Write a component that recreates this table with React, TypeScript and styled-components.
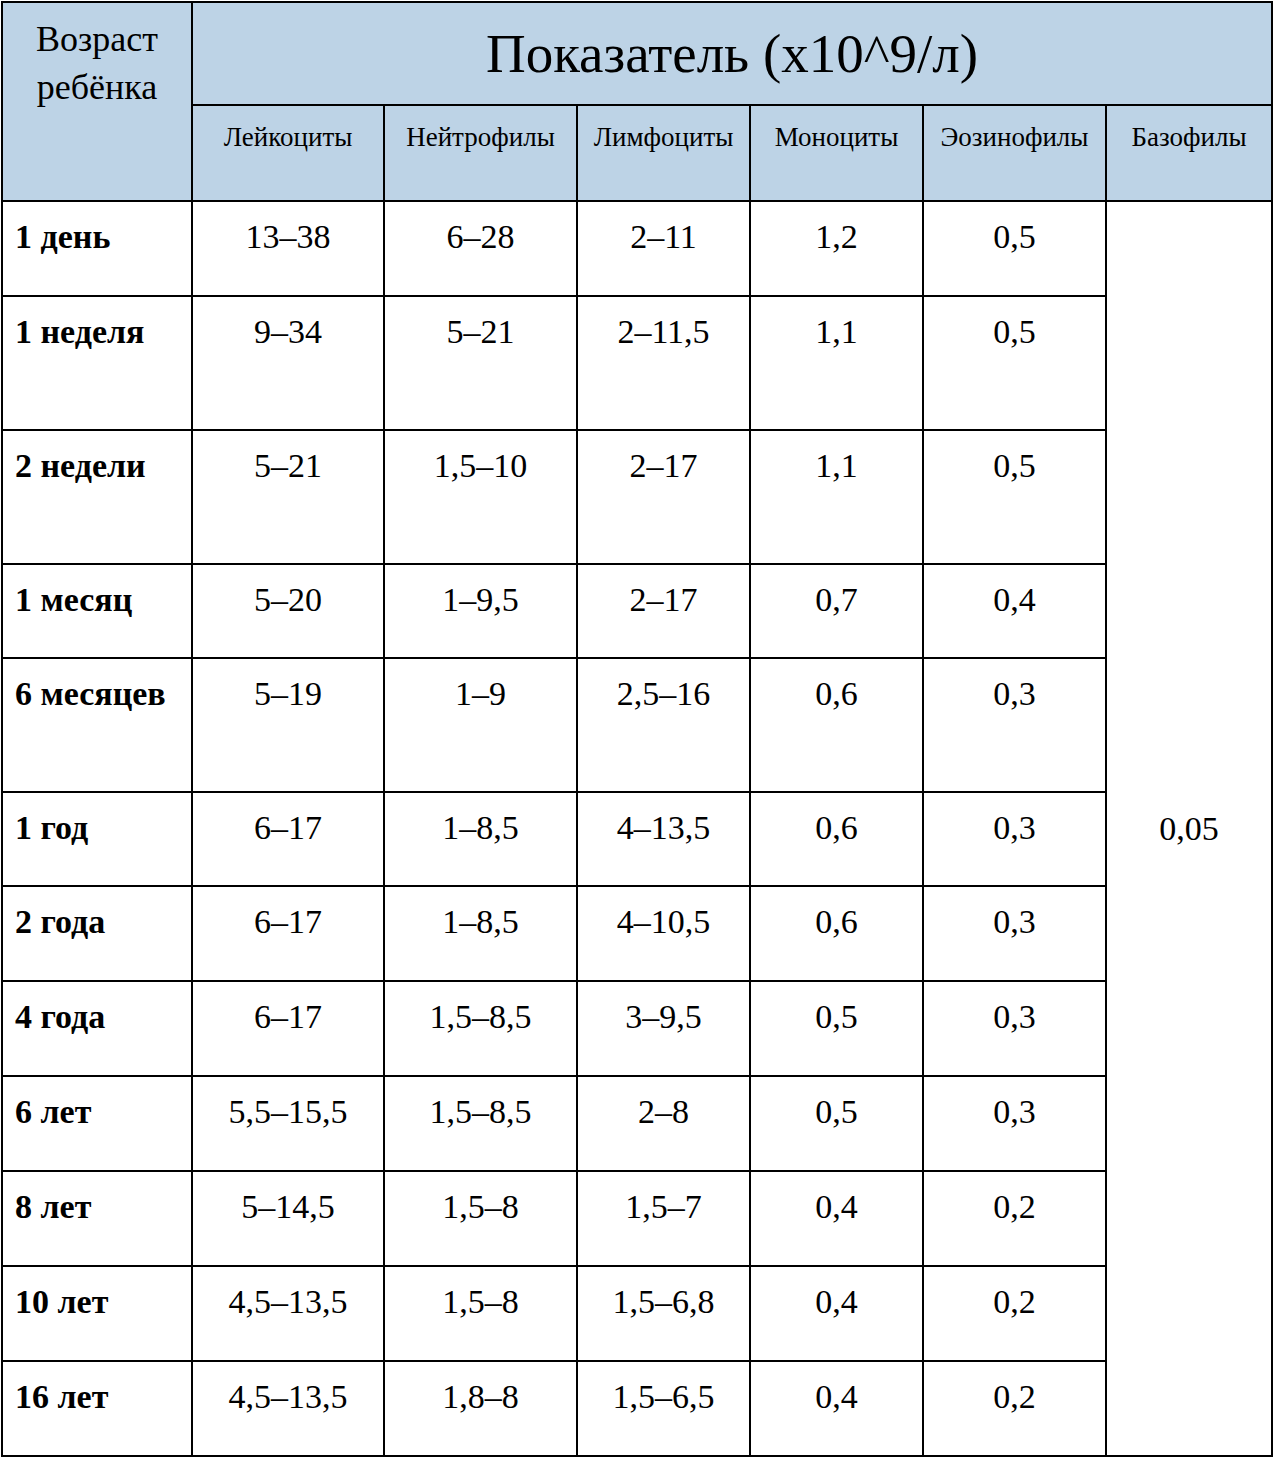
import React from "react";
import styled, { createGlobalStyle } from "styled-components";

const Global = createGlobalStyle`
  html, body { margin: 0; padding: 0; background: #ffffff; }
  body { font-family: "Liberation Serif", "Times New Roman", serif; color: #000; }
`;

const Table = styled.table`
  border-collapse: collapse;
  table-layout: fixed;
  width: 1270px;
  margin: 1px 0 0 1px;
  font-family: "Liberation Serif", "Times New Roman", serif;
`;

const HeadCell = styled.th<{ $size: number; $valign?: string; $pad?: number; $lh?: number }>`
  background: #bdd3e6;
  border: 2px solid #000;
  font-weight: normal;
  font-size: ${(p) => p.$size}px;
  line-height: ${(p) => (p.$lh ? `${p.$lh}px` : "1.2")};
  text-align: center;
  vertical-align: ${(p) => p.$valign || "top"};
  padding: ${(p) => (p.$valign === "middle" ? "0" : `${p.$pad ?? 16}px 2px 0`)};
  white-space: nowrap;
`;

const AgeCell = styled.td`
  border: 2px solid #000;
  font-weight: bold;
  font-size: 34px;
  text-align: left;
  vertical-align: top;
  padding: 16px 0 0 12px;
  white-space: nowrap;
`;

const ValueCell = styled.td`
  border: 2px solid #000;
  font-size: 34px;
  text-align: center;
  vertical-align: top;
  padding: 16px 0 0;
  white-space: nowrap;
`;

const BasoCell = styled(ValueCell)`
  vertical-align: middle;
  padding: 0;
`;

const Row = styled.tr<{ $h: number }>`
  height: ${(p) => p.$h}px;
`;

const cols = [190, 192, 193, 173, 173, 183, 166];
const subHeads = ["Лейкоциты", "Нейтрофилы", "Лимфоциты", "Моноциты", "Эозинофилы", "Базофилы"];

const rows: { age: string; h: number; v: string[] }[] = [
  { age: "1 день", h: 95, v: ["13–38", "6–28", "2–11", "1,2", "0,5"] },
  { age: "1 неделя", h: 134, v: ["9–34", "5–21", "2–11,5", "1,1", "0,5"] },
  { age: "2 недели", h: 134, v: ["5–21", "1,5–10", "2–17", "1,1", "0,5"] },
  { age: "1 месяц", h: 94, v: ["5–20", "1–9,5", "2–17", "0,7", "0,4"] },
  { age: "6 месяцев", h: 134, v: ["5–19", "1–9", "2,5–16", "0,6", "0,3"] },
  { age: "1 год", h: 94, v: ["6–17", "1–8,5", "4–13,5", "0,6", "0,3"] },
  { age: "2 года", h: 95, v: ["6–17", "1–8,5", "4–10,5", "0,6", "0,3"] },
  { age: "4 года", h: 95, v: ["6–17", "1,5–8,5", "3–9,5", "0,5", "0,3"] },
  { age: "6 лет", h: 95, v: ["5,5–15,5", "1,5–8,5", "2–8", "0,5", "0,3"] },
  { age: "8 лет", h: 95, v: ["5–14,5", "1,5–8", "1,5–7", "0,4", "0,2"] },
  { age: "10 лет", h: 95, v: ["4,5–13,5", "1,5–8", "1,5–6,8", "0,4", "0,2"] },
  { age: "16 лет", h: 95, v: ["4,5–13,5", "1,8–8", "1,5–6,5", "0,4", "0,2"] },
];

export default function App() {
  return (
    <>
      <Global />
      <Table>
        <colgroup>
          {cols.map((w, i) => (
            <col key={i} style={{ width: w }} />
          ))}
        </colgroup>
        <thead>
          <Row $h={103}>
            <HeadCell rowSpan={2} $size={36} $lh={48} $pad={12}>
              Возраст
              <br />
              ребёнка
            </HeadCell>
            <HeadCell colSpan={6} $size={55} $valign="middle">
              Показатель (x10^9/л)
            </HeadCell>
          </Row>
          <Row $h={96}>
            {subHeads.map((s) => (
              <HeadCell key={s} $size={27} $pad={15}>
                {s}
              </HeadCell>
            ))}
          </Row>
        </thead>
        <tbody>
          {rows.map((r, i) => (
            <Row key={r.age} $h={r.h}>
              <AgeCell>{r.age}</AgeCell>
              {r.v.map((x, j) => (
                <ValueCell key={j}>{x}</ValueCell>
              ))}
              {i === 0 && <BasoCell rowSpan={rows.length}>0,05</BasoCell>}
            </Row>
          ))}
        </tbody>
      </Table>
    </>
  );
}
